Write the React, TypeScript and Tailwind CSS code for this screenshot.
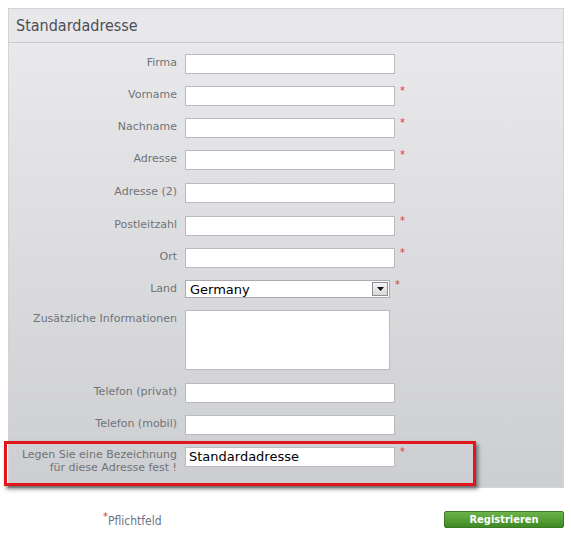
import { useState } from 'react';

type Field = {
  label: string;
  required?: boolean;
  kind?: 'text' | 'select' | 'textarea';
  gap: number;
};

const fields: Field[] = [
  { label: 'Firma', gap: 0 },
  { label: 'Vorname', required: true, gap: 12 },
  { label: 'Nachname', required: true, gap: 12 },
  { label: 'Adresse', required: true, gap: 12 },
  { label: 'Adresse (2)', gap: 13 },
  { label: 'Postleitzahl', required: true, gap: 13 },
  { label: 'Ort', required: true, gap: 12 },
  { label: 'Land', required: true, kind: 'select', gap: 12 },
  { label: 'Zusätzliche Informationen', kind: 'textarea', gap: 12 },
  { label: 'Telefon (privat)', gap: 13 },
  { label: 'Telefon (mobil)', gap: 12 },
];

const condensed = { fontFamily: '"DejaVu Sans Condensed", "DejaVu Sans", sans-serif' };
const plain = { fontFamily: '"DejaVu Sans", sans-serif' };

function Star() {
  return <span className="ml-[5px] -mt-[1px] text-[11px] leading-none text-[#d83c3c]">*</span>;
}

function FormRow({ field }: { field: Field }) {
  return (
    <div className="flex items-start" style={{ marginTop: field.gap }}>
      <div className="w-[168px] pt-[1px] text-right text-[11px] leading-[16px] text-[#707377]" style={plain}>
        {field.label}
      </div>
      <div className="ml-[8px] flex items-start">
        {field.kind === 'select' ? (
          <div className="flex h-[18px] w-[205px] items-center border border-[#a9abb0] bg-white">
            <span className="flex-1 pl-[4px] text-[13px] leading-none text-black" style={plain}>
              Germany
            </span>
            <div className="mr-[1px] flex h-[14px] w-[16px] items-center justify-center border border-[#8e9096] bg-gradient-to-b from-[#f4f4f4] to-[#d8d8d8]">
              <svg width="7" height="4" viewBox="0 0 7 4">
                <path d="M0 0h7L3.5 4z" fill="#111" />
              </svg>
            </div>
          </div>
        ) : field.kind === 'textarea' ? (
          <div className="h-[60px] w-[205px] border border-[#b9bbc0] bg-white" />
        ) : (
          <div className="h-[20px] w-[210px] border border-[#b9bbc0] bg-white" />
        )}
        {field.required && <Star />}
      </div>
    </div>
  );
}

export default function App() {
  const [name] = useState('Standardadresse');

  return (
    <div className="min-h-screen bg-white pl-[8px] pt-[8px]" style={condensed}>
      <div className="w-[556px] border border-[#d2d3d7] bg-gradient-to-b from-[#ebebed] to-[#cdced1]">
        <div className="flex h-[34px] items-center border-b border-[#c9cace] bg-[#e8e8eb] pl-[7px] text-[16px] text-[#4b4e53]">
          Standardadresse
        </div>

        <div className="pt-[11px] pb-[13px]">
          {fields.map(f => (
            <FormRow key={f.label} field={f} />
          ))}

          {/* name of the address, highlighted */}
          <div className="relative mt-[12px] flex items-start">
            <div className="w-[168px] pt-[1px] text-right text-[11px] leading-[13px] text-[#707377]" style={plain}>
              Legen Sie eine Bezeichnung
              <br />
              für diese Adresse fest !
            </div>
            <div className="ml-[8px] flex items-start">
              <div className="flex h-[20px] w-[210px] items-center border border-[#b9bbc0] bg-white pl-[3px] text-[13px] text-black" style={plain}>
                {name}
              </div>
              <Star />
            </div>
            <div className="pointer-events-none absolute -left-[5px] -top-[6px] h-[45px] w-[472px] border-[3px] border-[#e0161a] shadow-[2px_3px_4px_rgba(0,0,0,0.5)]" />
          </div>
        </div>
      </div>

      <div className="flex items-start pt-[23px]">
        <div className="ml-[95px] flex items-start text-[12px] text-[#6b7483]">
          <span className="text-[11px] leading-none text-[#d83c3c]">*</span>
          <span className="mt-[4px] leading-none">Pflichtfeld</span>
        </div>
        <button className="ml-auto mr-[7px] h-[17px] w-[120px] rounded-[2px] border border-[#3b7a22] bg-gradient-to-b from-[#6cb34a] to-[#3f8a25] text-[11px] font-bold leading-none text-white">
          Registrieren
        </button>
      </div>
    </div>
  );
}
